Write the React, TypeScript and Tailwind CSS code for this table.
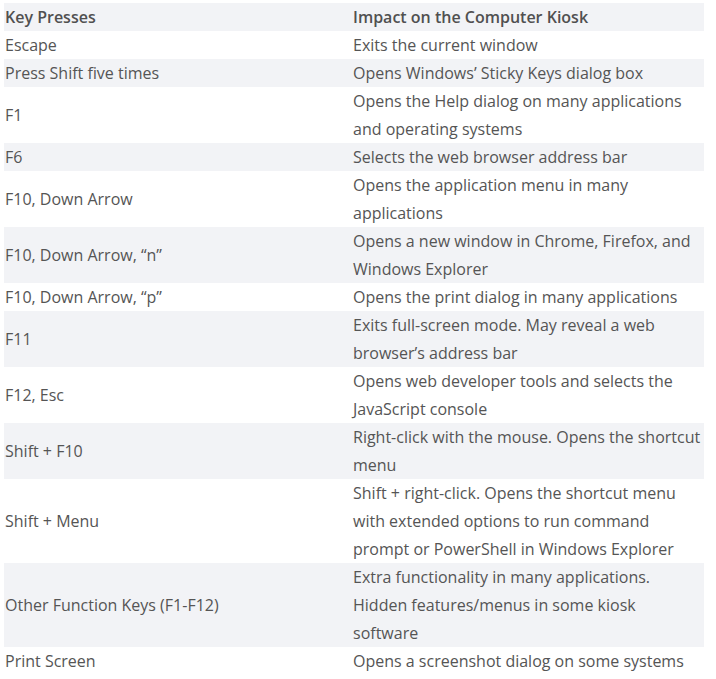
const rows: [string, string][] = [
  ["Escape", "Exits the current window"],
  ["Press Shift five times", "Opens Windows’ Sticky Keys dialog box"],
  ["F1", "Opens the Help dialog on many applications and operating systems"],
  ["F6", "Selects the web browser address bar"],
  ["F10, Down Arrow", "Opens the application menu in many applications"],
  ["F10, Down Arrow, “n”", "Opens a new window in Chrome, Firefox, and Windows Explorer"],
  ["F10, Down Arrow, “p”", "Opens the print dialog in many applications"],
  ["F11", "Exits full-screen mode. May reveal a web browser’s address bar"],
  ["F12, Esc", "Opens web developer tools and selects the JavaScript console"],
  ["Shift + F10", "Right-click with the mouse. Opens the shortcut menu"],
  ["Shift + Menu", "Shift + right-click. Opens the shortcut menu with extended options to run command prompt or PowerShell in Windows Explorer"],
  ["Other Function Keys (F1-F12)", "Extra functionality in many applications. Hidden features/menus in some kiosk software"],
  ["Print Screen", "Opens a screenshot dialog on some systems"],
];

export default function App() {
  return (
    <div className="bg-white w-[716px] h-[679px] pt-[3px] pl-[4px] font-['Open_Sans',sans-serif] text-[16px] leading-[28px] text-[#555]">
      <table className="w-[700px] border-collapse table-fixed">
        <thead>
          <tr className="bg-[#f2f3f6]">
            <th className="w-[349px] text-left font-semibold pl-[1px] text-[#505050]">Key Presses</th>
            <th className="text-left font-semibold text-[#505050]">Impact on the Computer Kiosk</th>
          </tr>
        </thead>
        <tbody>
          {rows.map(([key, impact], i) => (
            <tr key={key} className={i % 2 === 1 ? "bg-[#f2f3f6]" : "bg-white"}>
              <td className="align-middle pl-[1px]">{key}</td>
              <td className="align-middle pr-[1px]">{impact}</td>
            </tr>
          ))}
        </tbody>
      </table>
    </div>
  );
}
